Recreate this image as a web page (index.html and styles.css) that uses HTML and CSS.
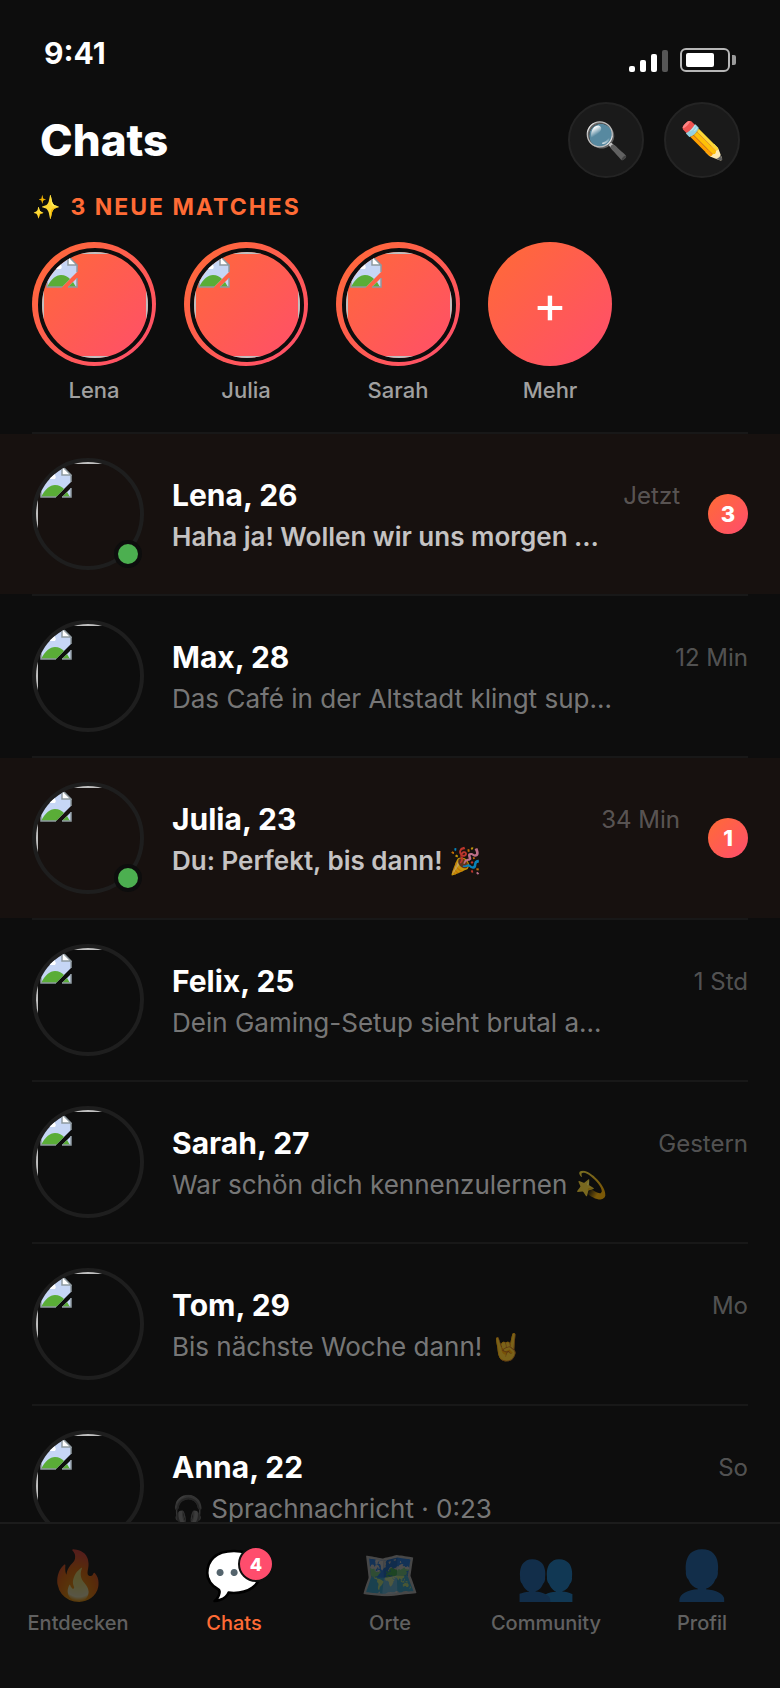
FILE: index.html
```
<!DOCTYPE html>
<html lang="de">
<head>
    <meta charset="UTF-8">
    <meta name="viewport" content="width=device-width, initial-scale=1.0">
    <title>Chats</title>
    <link rel="stylesheet" href="styles.css">
</head>
<body>
    <!-- placeholder for missing photos -->
    <svg class="sprite" aria-hidden="true">
        <symbol id="noPhoto" viewBox="0 0 32 32">
            <path d="M1 0H22L31 9V16L16 31H1Z" fill="#c6d6f5"/>
            <path d="M31 22V31H22Z" fill="#c6d6f5"/>
            <path d="M5 11a4 4 0 0 1 4-4 4 4 0 0 1 6 2 3 3 0 0 1 0 4H7a3 3 0 0 1-2-2Z" fill="#fff"/>
            <path d="M1 31C5 23 10 19 15 19c4 0 7 2 9 4L16 31Z" fill="#5aad37"/>
            <path d="M27 26L30 31H22Z" fill="#5aad37"/>
            <path d="M22 0V9H31Z" fill="#fff"/>
            <path d="M22 0V9H31L22 0H1V31H16M31 9V16M31 22V31H22" fill="none" stroke="#8f9aa0" stroke-width="1.500"/>
        </symbol>
    </svg>

    <div class="app">
        <div class="status-bar">
            <span class="clock">9:41</span>
            <div class="status-icons">
                <div class="signal">
                    <span class="bar bar-1"></span>
                    <span class="bar bar-2"></span>
                    <span class="bar bar-3"></span>
                    <span class="bar bar-4"></span>
                </div>
                <div class="battery">
                    <div class="battery-body"><div class="battery-level"></div></div>
                    <div class="battery-tip"></div>
                </div>
            </div>
        </div>

        <header class="header">
            <h1>Chats</h1>
            <div class="header-actions">
                <button type="button" class="icon-btn" aria-label="Suchen">🔍</button>
                <button type="button" class="icon-btn" aria-label="Neue Nachricht">✏️</button>
            </div>
        </header>

        <main class="content">
            <section class="matches">
                <h2>✨ 3 Neue Matches</h2>
                <div class="match-row">
                    <a href="#" class="match">
                        <span class="match-ring"><span class="match-photo"><span class="photo"><svg class="photo-icon"><use href="#noPhoto"/></svg></span></span></span>
                        <span class="match-name">Lena</span>
                    </a>
                    <a href="#" class="match">
                        <span class="match-ring"><span class="match-photo"><span class="photo"><svg class="photo-icon"><use href="#noPhoto"/></svg></span></span></span>
                        <span class="match-name">Julia</span>
                    </a>
                    <a href="#" class="match">
                        <span class="match-ring"><span class="match-photo"><span class="photo"><svg class="photo-icon"><use href="#noPhoto"/></svg></span></span></span>
                        <span class="match-name">Sarah</span>
                    </a>
                    <a href="#" class="match">
                        <span class="match-ring match-more">+</span>
                        <span class="match-name">Mehr</span>
                    </a>
                </div>
            </section>

            <ul class="chat-list">
                <li>
                    <a href="#" class="chat unread">
                        <span class="avatar">
                            <span class="avatar-photo"><span class="photo"><svg class="photo-icon"><use href="#noPhoto"/></svg></span></span>
                            <span class="online"></span>
                        </span>
                        <span class="chat-body">
                            <span class="chat-top"><span class="name">Lena, 26</span><span class="time">Jetzt</span></span>
                            <span class="preview">Haha ja! Wollen wir uns morgen …</span>
                        </span>
                        <span class="count">3</span>
                    </a>
                </li>
                <li>
                    <a href="#" class="chat">
                        <span class="avatar">
                            <span class="avatar-photo"><span class="photo"><svg class="photo-icon"><use href="#noPhoto"/></svg></span></span>
                        </span>
                        <span class="chat-body">
                            <span class="chat-top"><span class="name">Max, 28</span><span class="time">12 Min</span></span>
                            <span class="preview">Das Café in der Altstadt klingt sup…</span>
                        </span>
                    </a>
                </li>
                <li>
                    <a href="#" class="chat unread">
                        <span class="avatar">
                            <span class="avatar-photo"><span class="photo"><svg class="photo-icon"><use href="#noPhoto"/></svg></span></span>
                            <span class="online"></span>
                        </span>
                        <span class="chat-body">
                            <span class="chat-top"><span class="name">Julia, 23</span><span class="time">34 Min</span></span>
                            <span class="preview">Du: Perfekt, bis dann! 🎉</span>
                        </span>
                        <span class="count">1</span>
                    </a>
                </li>
                <li>
                    <a href="#" class="chat">
                        <span class="avatar">
                            <span class="avatar-photo"><span class="photo"><svg class="photo-icon"><use href="#noPhoto"/></svg></span></span>
                        </span>
                        <span class="chat-body">
                            <span class="chat-top"><span class="name">Felix, 25</span><span class="time">1 Std</span></span>
                            <span class="preview">Dein Gaming-Setup sieht brutal a…</span>
                        </span>
                    </a>
                </li>
                <li>
                    <a href="#" class="chat">
                        <span class="avatar">
                            <span class="avatar-photo"><span class="photo"><svg class="photo-icon"><use href="#noPhoto"/></svg></span></span>
                        </span>
                        <span class="chat-body">
                            <span class="chat-top"><span class="name">Sarah, 27</span><span class="time">Gestern</span></span>
                            <span class="preview">War schön dich kennenzulernen 💫</span>
                        </span>
                    </a>
                </li>
                <li>
                    <a href="#" class="chat">
                        <span class="avatar">
                            <span class="avatar-photo"><span class="photo"><svg class="photo-icon"><use href="#noPhoto"/></svg></span></span>
                        </span>
                        <span class="chat-body">
                            <span class="chat-top"><span class="name">Tom, 29</span><span class="time">Mo</span></span>
                            <span class="preview">Bis nächste Woche dann! 🤘</span>
                        </span>
                    </a>
                </li>
                <li>
                    <a href="#" class="chat">
                        <span class="avatar">
                            <span class="avatar-photo"><span class="photo"><svg class="photo-icon"><use href="#noPhoto"/></svg></span></span>
                        </span>
                        <span class="chat-body">
                            <span class="chat-top"><span class="name">Anna, 22</span><span class="time">So</span></span>
                            <span class="preview">🎧 Sprachnachricht · 0:23</span>
                        </span>
                    </a>
                </li>
            </ul>
        </main>

        <nav class="tab-bar">
            <a href="#" class="tab"><span class="tab-icon">🔥</span><span class="tab-label">Entdecken</span></a>
            <a href="#" class="tab active"><span class="tab-icon">💬<span class="tab-badge">4</span></span><span class="tab-label">Chats</span></a>
            <a href="#" class="tab"><span class="tab-icon">🗺️</span><span class="tab-label">Orte</span></a>
            <a href="#" class="tab"><span class="tab-icon">👥</span><span class="tab-label">Community</span></a>
            <a href="#" class="tab"><span class="tab-icon">👤</span><span class="tab-label">Profil</span></a>
        </nav>
    </div>
</body>
</html>
```
FILE: styles.css
```
* {
    box-sizing: border-box;
    margin: 0;
    padding: 0;
}

body {
    font-family: Inter, "Liberation Sans", sans-serif;
    background-color: #0d0d0d;
    color: #fff;
}

a {
    color: inherit;
    text-decoration: none;
}

.sprite {
    display: none;
}

.app {
    display: flex;
    flex-direction: column;
    height: 100vh;
}

/* Status bar */
.status-bar {
    display: flex;
    justify-content: space-between;
    align-items: flex-end;
    padding: 34px 44px 0;
}

.clock {
    font-size: 30px;
    line-height: 38px;
    font-weight: 700;
}

.status-icons {
    display: flex;
    align-items: flex-end;
    gap: 12px;
}

.signal {
    display: flex;
    align-items: flex-end;
    gap: 5px;
}

.bar {
    width: 6px;
    border-radius: 2px;
    background: #fff;
}

.bar-1 { height: 6px; }
.bar-2 { height: 12px; }
.bar-3 { height: 18px; }
.bar-4 { height: 22px; opacity: 0.3; }

.battery {
    display: flex;
    align-items: center;
    gap: 2px;
}

.battery-body {
    width: 50px;
    height: 24px;
    padding: 3px 4px;
    border: 2px solid #b6b6b6;
    border-radius: 6px;
}

.battery-level {
    width: 28px;
    height: 100%;
    border-radius: 2px;
    background: #fff;
}

.battery-tip {
    width: 4px;
    height: 10px;
    border-radius: 0 2px 2px 0;
    background: #9a9a9a;
}

/* Header */
.header {
    display: flex;
    justify-content: space-between;
    align-items: center;
    padding: 30px 40px 15px;
}

h1 {
    font-size: 44px;
    line-height: 54px;
    font-weight: 800;
}

.header-actions {
    display: flex;
    gap: 20px;
}

.icon-btn {
    width: 76px;
    height: 76px;
    border: 2px solid #242424;
    border-radius: 50%;
    background: #1a1a1a;
    color: #fff;
    font-family: inherit;
    font-size: 36px;
    cursor: pointer;
}

.content {
    flex: 1;
    min-height: 0;
    overflow-y: auto;
    scrollbar-width: none;
}

/* New matches */
.matches {
    margin: 0 32px;
    border-bottom: 2px solid #181818;
}

h2 {
    font-size: 23px;
    line-height: 29px;
    font-weight: 700;
    letter-spacing: 2px;
    text-transform: uppercase;
    color: #ff6b35;
    margin-bottom: 20px;
}

.match-row {
    display: flex;
    gap: 28px;
    padding-bottom: 28px;
}

.match {
    display: flex;
    flex-direction: column;
    align-items: center;
    gap: 10px;
}

.match-ring {
    width: 124px;
    height: 124px;
    padding: 6px;
    border-radius: 50%;
    background: linear-gradient(135deg, #ff6b35, #ff4d6d);
}

.match-photo {
    display: block;
    width: 114px;
    height: 114px;
    border: 4px solid #0d0d0d;
    border-radius: 50%;
    overflow: hidden;
}

.match-more {
    display: flex;
    align-items: center;
    justify-content: center;
    font-size: 52px;
}

.match-name {
    font-size: 22px;
    line-height: 28px;
    font-weight: 500;
    color: #a0a0a0;
}

/* Empty photo frame with its icon in the corner */
.photo {
    display: block;
    height: 100%;
    padding: 2px;
    border: 2px solid #c0c0c0;
}

.photo-icon {
    display: block;
    width: 32px;
    height: 32px;
}

/* Chat list */
.chat-list {
    list-style: none;
}

.chat-list li::after {
    content: "";
    display: block;
    height: 2px;
    margin: 0 32px;
    background: #181818;
}

.chat {
    display: flex;
    align-items: center;
    gap: 28px;
    padding: 24px 32px;
}

.chat.unread {
    background: #17110f;
}

.avatar {
    position: relative;
    flex-shrink: 0;
}

.avatar-photo {
    display: block;
    width: 112px;
    height: 112px;
    border: 4px solid #1e1e1e;
    border-radius: 50%;
    overflow: hidden;
}

.avatar-photo .photo {
    width: 112px;
    height: 112px;
}

.online {
    position: absolute;
    right: 2px;
    bottom: 2px;
    width: 28px;
    height: 28px;
    border: 4px solid #0d0d0d;
    border-radius: 50%;
    background: #4caf50;
}

.chat-body {
    flex: 1;
    min-width: 0;
}

.chat-top {
    display: flex;
    justify-content: space-between;
    align-items: center;
    margin-bottom: 6px;
}

.name {
    font-size: 30px;
    line-height: 40px;
    font-weight: 700;
}

.time {
    font-size: 24px;
    color: rgba(255, 255, 255, 0.3);
}

.preview {
    display: block;
    max-width: 450px;
    font-size: 26px;
    line-height: 32px;
    color: rgba(255, 255, 255, 0.45);
    white-space: nowrap;
    overflow: hidden;
    text-overflow: ellipsis;
}

.unread .preview {
    font-weight: 600;
    color: rgba(255, 255, 255, 0.75);
}

.count {
    display: flex;
    align-items: center;
    justify-content: center;
    width: 40px;
    height: 40px;
    border-radius: 50%;
    background: linear-gradient(135deg, #ff6b35, #ff4d6d);
    font-size: 22px;
    font-weight: 800;
}

/* Tab bar */
.tab-bar {
    display: flex;
    height: 166px;
    padding-top: 24px;
    border-top: 2px solid #1c1c1c;
    background: #0f0f0f;
}

.tab {
    flex: 1;
    display: flex;
    flex-direction: column;
    align-items: center;
    gap: 9px;
    color: rgba(255, 255, 255, 0.35);
}

.tab.active {
    color: #ff6b35;
}

.tab-icon {
    position: relative;
    font-size: 48px;
    line-height: 54px;
}

.tab:not(.active) .tab-icon {
    color: rgba(255, 255, 255, 0.3);
}

.tab-label {
    font-size: 20px;
    line-height: 24px;
    font-weight: 500;
}

.tab-badge {
    position: absolute;
    top: -2px;
    right: -10px;
    width: 36px;
    height: 36px;
    border: 2px solid #0f0f0f;
    border-radius: 50%;
    background: #ff4d6d;
    color: #fff;
    font-size: 18px;
    line-height: 34px;
    font-weight: 800;
    text-align: center;
}
```
